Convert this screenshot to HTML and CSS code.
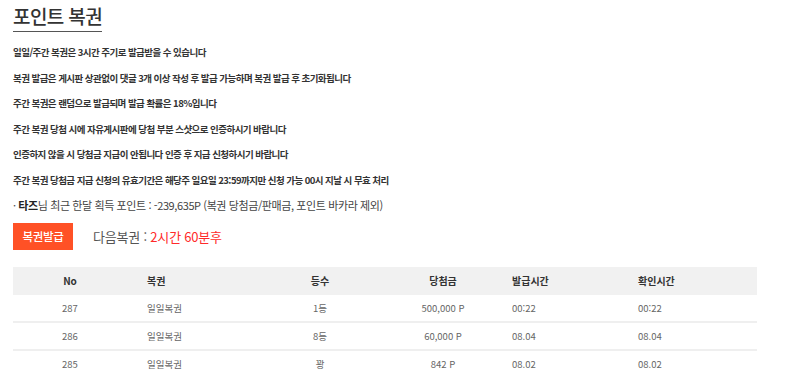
FILE: index.html
```html
<!DOCTYPE html>
<html lang="ko">
<head>
<meta charset="utf-8">
<link rel="stylesheet" href="styles.css">
</head>
<body>
<div class="page">
  <h2 class="title">포인트 복권</h2>
  <ul class="notes">
    <li>일일/주간 복권은 3시간 주기로 발급받을 수 있습니다</li>
    <li>복권 발급은 게시판 상관없이 댓글 3개 이상 작성 후 발급 가능하며 복권 발급 후 초기화됩니다</li>
    <li>주간 복권은 랜덤으로 발급되며 발급 확률은 18%입니다</li>
    <li>주간 복권 당첨 시에 자유게시판에 당첨 부분 스샷으로 인증하시기 바랍니다</li>
    <li>인증하지 않을 시 당첨금 지급이 안됩니다 인증 후 지급 신청하시기 바랍니다</li>
    <li>주간 복권 당첨금 지급 신청의 유효기간은 해당주 일요일 23:59까지만 신청 가능 00시 지날 시 무효 처리</li>
  </ul>
  <p class="earned">· <b>타즈</b>님 최근 한달 획득 포인트 : -239,635P (복권 당첨금/판매금, 포인트 바카라 제외)</p>
  <div class="issue">
    <button class="btn">복권발급</button>
    <span class="next">다음복권 : <em>2시간 60분후</em></span>
  </div>
  <div class="table">
    <div class="row head">
      <div class="c c1">No</div>
      <div class="c c2">복권</div>
      <div class="c c3">등수</div>
      <div class="c c4">당첨금</div>
      <div class="c c5">발급시간</div>
      <div class="c c6">확인시간</div>
    </div>
    <div class="row">
      <div class="c c1">287</div>
      <div class="c c2">일일복권</div>
      <div class="c c3">1등</div>
      <div class="c c4">500,000 P</div>
      <div class="c c5">00:22</div>
      <div class="c c6">00:22</div>
    </div>
    <div class="row">
      <div class="c c1">286</div>
      <div class="c c2">일일복권</div>
      <div class="c c3">8등</div>
      <div class="c c4">60,000 P</div>
      <div class="c c5">08.04</div>
      <div class="c c6">08.04</div>
    </div>
    <div class="row">
      <div class="c c1">285</div>
      <div class="c c2">일일복권</div>
      <div class="c c3">꽝</div>
      <div class="c c4">842 P</div>
      <div class="c c5">08.02</div>
      <div class="c c6">08.02</div>
    </div>
  </div>
</div>
</body>
</html>
```
FILE: styles.css
```css
html, body {
  margin: 0;
  padding: 0;
  background: #fff;
}
body {
  font-family: "Noto Sans CJK KR", "Noto Sans", sans-serif;
  color: #333;
}
.page {
  padding: 4px 13px 0;
  width: 744px;
}
.title {
  display: inline-block;
  margin: 0;
  font-size: 19px;
  line-height: 24px;
  font-weight: 500;
  letter-spacing: -0.6px;
  color: #333;
  padding-bottom: 3px;
  border-bottom: 1px solid #555;
}
.notes {
  list-style: none;
  margin: 8px 0 0;
  padding: 0;
}
.notes li {
  font-size: 9.5px;
  line-height: 25.5px;
  font-weight: 700;
  letter-spacing: -0.55px;
  color: #333;
}
.earned {
  margin: 0;
  font-size: 11px;
  line-height: 25.5px;
  letter-spacing: -0.4px;
  color: #444;
}
.earned b {
  font-weight: 700;
  color: #222;
}
.issue {
  display: flex;
  align-items: center;
  gap: 20px;
  margin-top: 4px;
}
.btn {
  width: 60px;
  height: 27px;
  border: 0;
  padding: 0;
  background: #ff5126;
  color: #fff;
  font-family: inherit;
  font-size: 11.5px;
  font-weight: 500;
  letter-spacing: -0.3px;
}
.next {
  font-size: 13px;
  letter-spacing: -0.2px;
  color: #555;
}
.next em {
  font-style: normal;
  color: #ff2a2a;
}
.table {
  margin-top: 17px;
  width: 744px;
}
.row {
  display: grid;
  grid-template-columns: 114px 133px 120px 126px 126px 125px;
  height: 26px;
  align-items: center;
  border-bottom: 2px solid #efefef;
  font-size: 9.5px;
  color: #666;
}
.row.head {
  background: #f1f1f1;
  height: 28px;
  border-bottom: 0;
  font-weight: 700;
  font-size: 10px;
  color: #333;
}
.c1, .c3, .c4 {
  text-align: center;
}
.c2 {
  padding-left: 20px;
}
.c5, .c6 {
  padding-left: 6px;
}
```
